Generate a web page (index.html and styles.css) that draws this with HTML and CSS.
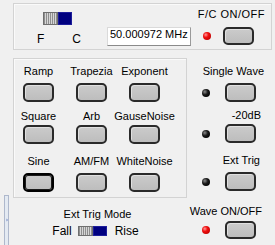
FILE: index.html
```html
<!DOCTYPE html>
<html>
<head>
  <meta charset="UTF-8">
  <title>Function Generator</title>
  <link rel="stylesheet" href="styles.css">
</head>
<body>
  <div class="app">
    <div class="rail">
      <div class="splitter">
        <svg width="4" height="6" viewBox="0 0 4 6"><polyline points="0.5,0.5 3,3 0.5,5.5" fill="none" stroke="#2b4fa8" stroke-width="1.2"/></svg>
      </div>
    </div>

    <div class="main">
      <div class="panel top">
        <div class="fc-switch">
          <div class="toggle"><span class="off"></span><span class="on"></span></div>
          <div class="fc-labels"><span>F</span><span>C</span></div>
        </div>
        <div class="freq">50.000972 MHz</div>
        <div class="ctl ctl-top">
          <div class="ctl-label wide">F/C ON/OFF</div>
          <div class="ctl-row">
            <span class="led red"></span>
            <button class="btn"></button>
          </div>
        </div>
      </div>

      <div class="middle">
        <div class="panel waves">
          <div class="cell r1"><span>Ramp</span><button class="btn"></button></div>
          <div class="cell r1"><span>Trapezia</span><button class="btn"></button></div>
          <div class="cell r1"><span>Exponent</span><button class="btn"></button></div>
          <div class="cell r2"><span>Square</span><button class="btn"></button></div>
          <div class="cell r2"><span>Arb</span><button class="btn"></button></div>
          <div class="cell r2"><span>GauseNoise</span><button class="btn"></button></div>
          <div class="cell r3"><span>Sine</span><button class="btn focus"></button></div>
          <div class="cell r3"><span>AM/FM</span><button class="btn"></button></div>
          <div class="cell r3"><span>WhiteNoise</span><button class="btn"></button></div>
        </div>

        <div class="side">
          <div class="ctl r1">
            <div class="ctl-label">Single Wave</div>
            <div class="ctl-row"><span class="led dark"></span><button class="btn"></button></div>
          </div>
          <div class="ctl r2">
            <div class="ctl-label pad3">-20dB</div>
            <div class="ctl-row"><span class="led dark"></span><button class="btn"></button></div>
          </div>
          <div class="ctl r3">
            <div class="ctl-label pad4">Ext Trig</div>
            <div class="ctl-row"><span class="led dark"></span><button class="btn"></button></div>
          </div>
        </div>
      </div>

      <div class="bottom">
        <div class="trig-mode">
          <div class="trig-label">Ext Trig Mode</div>
          <div class="trig-row">
            <span>Fall</span>
            <div class="toggle"><span class="off"></span><span class="on"></span></div>
            <span>Rise</span>
          </div>
        </div>
        <div class="ctl ctl-wave">
          <div class="ctl-label">Wave ON/OFF</div>
          <div class="ctl-row"><span class="led red"></span><button class="btn btn-top"></button></div>
        </div>
      </div>
    </div>
  </div>
</body>
</html>
```

FILE: styles.css
```css
body {
  margin: 0;
  background-color: #f0f0f0;
  font-family: "Liberation Sans", Arial, sans-serif;
  font-size: 11px;
  line-height: 13px;
  color: #000;
}
.app {
  display: flex;
  width: 275px;
  height: 245px;
  overflow: hidden;
}
.rail {
  width: 13px;
  display: flex;
  flex-direction: column;
  justify-content: flex-end;
}
.splitter {
  width: 3px;
  height: 47px;
  margin-left: 4px;
  border: 1px solid #aeb8cc;
  border-bottom: none;
  background-color: #e4eaf2;
  display: flex;
  align-items: center;
  justify-content: center;
  padding-bottom: 2px;
  box-sizing: content-box;
}
.splitter svg {
  margin-left: 1px;
}
.main {
  width: 262px;
}
.panel {
  box-sizing: border-box;
  border: 1px solid #d3d3d3;
  box-shadow: inset 1px 1px 0 #fafafa;
}
.top {
  margin-top: 3px;
  width: 259px;
  height: 47px;
  display: flex;
  align-items: flex-start;
}
.fc-switch {
  width: 50px;
  margin: 8px 0 0 18px;
  display: flex;
  flex-direction: column;
  align-items: center;
}
.fc-labels {
  width: 50px;
  box-sizing: border-box;
  display: flex;
  justify-content: space-between;
  padding: 0 1px 0 5px;
  margin-top: 8px;
  font-size: 12px;
}
.toggle {
  display: flex;
  width: 29px;
  height: 13px;
}
.toggle .off {
  width: 15px;
  box-sizing: border-box;
  border: 1px solid #6f6f6f;
  background: repeating-linear-gradient(90deg, #8e8e8e 0 1px, #d6d6d6 1px 2px);
}
.toggle .on {
  width: 14px;
  box-sizing: border-box;
  border: 1px solid #1d1d9a;
  background-color: #000080;
}
.freq {
  margin: 23px 0 0 25px;
  width: 84px;
  height: 19px;
  box-sizing: border-box;
  padding: 0 2px;
  background-color: #fff;
  border: 1px solid;
  border-color: #dadada #9a9a9a #8a8a8a #dadada;
  white-space: nowrap;
}
.ctl {
  display: flex;
  flex-direction: column;
}
.ctl-label {
  text-align: right;
  padding-right: 8px;
  white-space: nowrap;
}
.ctl-label.wide {
  letter-spacing: 0.5px;
  padding-right: 6px;
}
.ctl-label.pad3 {
  padding-right: 11px;
}
.ctl-label.pad4 {
  padding-right: 12px;
}
.ctl-row {
  display: flex;
  align-items: center;
  padding-left: 15px;
}
.ctl-row .btn {
  margin-left: 15px;
}
.ctl-top {
  margin: 4px 0 0 auto;
}
.ctl-top .ctl-row {
  margin-top: 6px;
  padding-left: 5px;
}
.ctl-top .ctl-row .btn {
  margin-left: 12px;
  height: 18px;
}
.led {
  width: 8px;
  height: 8px;
  border-radius: 50%;
}
.led.red {
  background: radial-gradient(circle at 35% 35%, #ff9a9a 0, #f01010 35%, #c00000 80%);
}
.led.dark {
  background: radial-gradient(circle at 35% 35%, #8a8a8a 0, #1a1a1a 40%, #000 80%);
}
.btn {
  width: 31px;
  height: 19px;
  padding: 0;
  box-sizing: border-box;
  border: 2px solid #2a2a2a;
  border-radius: 5px;
  background: linear-gradient(#cbcbcb, #bdbdbd);
  box-shadow: inset 1px 1px 0 #e0e0e0;
}
.btn.focus {
  border-color: #000;
  box-shadow: inset 0 0 0 1px #1a1a1a;
}
.middle {
  display: flex;
  margin-top: 8px;
}
.waves {
  width: 174px;
  height: 140px;
  padding-top: 6px;
  display: grid;
  grid-template-columns: repeat(3, 49px);
  column-gap: 4px;
  align-content: start;
}
.cell {
  display: flex;
  flex-direction: column;
  align-items: center;
  white-space: nowrap;
}
.r1 .btn {
  margin-top: 5px;
}
.r2 {
  margin-top: 8px;
}
.r2 .btn {
  margin-top: 2px;
}
.r3 {
  margin-top: 11px;
}
.r3 .btn {
  margin-top: 5px;
}
.side {
  width: 85px;
  padding-top: 7px;
}
.side .ctl.r1 {
  margin-top: 0;
}
.side .ctl.r2 {
  margin-top: 7px;
}
.side .ctl-row .btn {
  margin-top: 0;
}
.side .r1 .ctl-row {
  margin-top: 5px;
}
.side .r2 .ctl-row {
  margin-top: 2px;
}
.side .r3 .ctl-row {
  margin-top: 5px;
}
.bottom {
  display: flex;
}
.trig-mode {
  width: 169px;
  padding-top: 10px;
  display: flex;
  flex-direction: column;
  align-items: center;
}
.trig-row {
  display: flex;
  align-items: flex-start;
  margin-top: 1px;
  margin-right: 4px;
}
.trig-row span {
  margin-top: 3px;
  font-size: 12px;
}
.trig-row .toggle {
  margin: 1px 8px 0 6px;
}
.ctl-wave {
  margin: 7px 0 0 5px;
  width: 83px;
}
.ctl-wave .ctl-row {
  margin-top: 3px;
}
.ctl-wave .btn {
  height: 18px;
}
```
